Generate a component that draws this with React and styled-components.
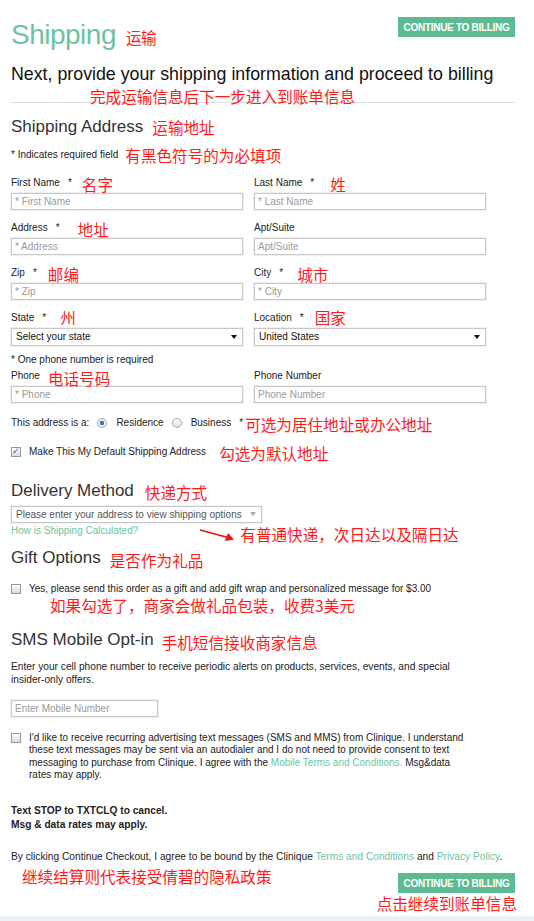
import React from "react";
import styled, { createGlobalStyle } from "styled-components";

const GlobalStyle = createGlobalStyle`
  body {
    margin: 0;
    background: #fff;
    font-family: "Liberation Sans", Arial, sans-serif;
    color: #222;
  }
`;

const Page = styled.div`
  width: 504px;
  padding: 0 19px 0 11px;
`;

const Note = styled.span`
  font-family: "Noto Sans CJK SC", sans-serif;
  color: #ff1a1a;
  font-size: ${(p) => p.size || 15.6}px;
  line-height: 1;
  margin-left: ${(p) => p.gap || 0}px;
  margin-right: ${(p) => p.right || 0}px;
  white-space: nowrap;
  position: relative;
  top: ${(p) => p.shift || 0}px;
`;

const NoteLine = styled.div`
  font-family: "Noto Sans CJK SC", sans-serif;
  color: #ff1a1a;
  font-size: 15.6px;
  line-height: 16px;
  padding-left: ${(p) => p.indent || 0}px;
  margin-top: ${(p) => p.top || 0}px;
  white-space: nowrap;
`;

const Header = styled.div`
  display: flex;
  justify-content: space-between;
  align-items: flex-start;
  height: 60px;
`;

const PageTitle = styled.h1`
  margin: 18px 0 0;
  font-size: 28px;
  line-height: 34px;
  font-weight: normal;
  color: #6cc49f;
  letter-spacing: -0.5px;
  display: flex;
  align-items: center;
`;

const Button = styled.button`
  margin-top: ${(p) => p.top || 0}px;
  width: 117px;
  height: 20px;
  border: none;
  background: #5cbb92;
  color: #fff;
  font-family: "Liberation Sans", Arial, sans-serif;
  font-weight: bold;
  font-size: 10px;
  letter-spacing: -0.3px;
  padding: 0;
`;

const Lead = styled.p`
  margin: 0;
  font-size: 17.8px;
  line-height: 28px;
  color: #111;
`;

const Divider = styled.hr`
  margin: -2px 0 0;
  border: none;
  border-top: 1px solid #ddd;
`;

const SectionTitle = styled.h2`
  margin: ${(p) => p.top || 0}px 0 0;
  font-size: 17px;
  line-height: 24px;
  font-weight: normal;
  color: #333;
  display: flex;
  align-items: center;
`;

const Small = styled.div`
  font-size: 10px;
  line-height: 14px;
  color: #222;
  margin-top: ${(p) => p.top || 0}px;
  display: flex;
  align-items: center;
`;

const Grid = styled.div`
  display: grid;
  grid-template-columns: 232px 232px;
  column-gap: 11px;
  row-gap: 11px;
  margin-top: ${(p) => p.top || 0}px;
`;

const Field = styled.div`
  display: flex;
  flex-direction: column;
  gap: 3px;
`;

const Label = styled.label`
  font-size: 10px;
  line-height: 14px;
  height: 14px;
  color: #222;
  display: flex;
  align-items: center;
  white-space: nowrap;
`;

const Star = styled.span`
  margin-left: 8px;
`;

const Input = styled.input`
  box-sizing: border-box;
  width: ${(p) => p.w || 232}px;
  height: 17px;
  margin-top: ${(p) => p.top || 0}px;
  border: 1px solid #c8c8c8;
  box-shadow: 0 0 0 1px #f0f0f0;
  padding: 0 3px;
  font-family: "Liberation Sans", Arial, sans-serif;
  font-size: 10px;
  color: #222;
  &::placeholder {
    color: #9a9a9a;
  }
`;

const Select = styled.div`
  box-sizing: border-box;
  width: ${(p) => p.w || 232}px;
  height: ${(p) => p.h || 18}px;
  margin-top: ${(p) => p.top || 0}px;
  border: 1px solid #c8c8c8;
  box-shadow: 0 0 0 1px #f0f0f0;
  display: flex;
  align-items: center;
  justify-content: space-between;
  padding: 0 4px;
  font-size: 10px;
  color: ${(p) => (p.muted ? "#555" : "#111")};
  &::after {
    content: "";
    border-left: 3.5px solid transparent;
    border-right: 3.5px solid transparent;
    border-top: 4px solid ${(p) => (p.muted ? "#aaa" : "#111")};
    margin-right: 1px;
  }
`;

const Row = styled.div`
  display: flex;
  align-items: ${(p) => p.align || "center"};
  margin-top: ${(p) => p.top || 0}px;
  font-size: 10px;
  line-height: 14px;
  color: #222;
  white-space: nowrap;
`;

const Radio = styled.span`
  box-sizing: border-box;
  width: 10px;
  height: 10px;
  border-radius: 50%;
  border: 1px solid #aaa;
  background: ${(p) =>
    p.checked ? "radial-gradient(circle, #2f7db8 0 2px, #e8eef4 2.5px)" : "linear-gradient(#fff, #ddd)"};
  margin: 0 9px 0 8px;
`;

const Check = styled.span`
  box-sizing: border-box;
  flex: none;
  width: 10px;
  height: 10px;
  border: 1px solid #999;
  background: linear-gradient(#fdfdfd, #dcdcdc);
  margin-right: 8px;
  margin-top: ${(p) => p.top || 0}px;
  display: flex;
  align-items: center;
  justify-content: center;
  color: #2a5fa8;
  font-size: 9px;
  line-height: 1;
`;

const Link = styled.a`
  color: #6cc49f;
  text-decoration: none;
`;

const HelpRow = styled.div`
  display: flex;
  align-items: flex-start;
  font-size: 10px;
  line-height: 14px;
  margin-top: 1px;
`;

const Para = styled.p`
  margin: ${(p) => p.top || 0}px 0 0;
  font-size: ${(p) => p.fs || 10.2}px;
  line-height: ${(p) => p.lh || 13}px;
  color: #222;
  font-weight: ${(p) => (p.bold ? "bold" : "normal")};
  white-space: ${(p) => (p.nowrap ? "nowrap" : "normal")};
  width: ${(p) => (p.w ? `${p.w}px` : "auto")};
`;

const Footer = styled.div`
  display: flex;
  justify-content: space-between;
  align-items: flex-start;
`;

const ButtonCol = styled.div`
  display: flex;
  flex-direction: column;
  align-items: flex-end;
  gap: 3px;
  margin-top: 10px;
`;

const Strip = styled.div`
  height: 10px;
  background: #eef1f5;
  margin-top: 4px;
`;

function Arrow() {
  return (
    <svg width="40" height="14" viewBox="0 0 40 14" style={{ marginLeft: 60, marginTop: 4 }}>
      <line x1="2" y1="2" x2="30" y2="9.5" stroke="#f01010" strokeWidth="1.6" />
      <polygon points="36,11.5 27,13 30,5" fill="#f01010" />
    </svg>
  );
}

export default function App() {
  return (
    <>
      <GlobalStyle />
      <Page>
        <Header>
          <PageTitle>
            Shipping<Note gap={10} shift={3}>运输</Note>
          </PageTitle>
          <Button top={17}>CONTINUE TO BILLING</Button>
        </Header>

        <Lead>Next, provide your shipping information and proceed to billing</Lead>
        <NoteLine indent={79}>完成运输信息后下一步进入到账单信息</NoteLine>
        <Divider />

        <SectionTitle top={12}>
          Shipping Address<Note gap={9} shift={1}>运输地址</Note>
        </SectionTitle>
        <Small top={8}>
          * Indicates required field<Note gap={7} shift={1}>有黑色符号的为必填项</Note>
        </Small>

        <Grid top={13}>
          <Field>
            <Label>First Name<Star>*</Star><Note gap={10} shift={2}>名字</Note></Label>
            <Input placeholder="* First Name" />
          </Field>
          <Field>
            <Label>Last Name<Star>*</Star><Note gap={16} shift={2}>姓</Note></Label>
            <Input placeholder="* Last Name" />
          </Field>
          <Field>
            <Label>Address<Star>*</Star><Note gap={18} shift={2}>地址</Note></Label>
            <Input placeholder="* Address" />
          </Field>
          <Field>
            <Label>Apt/Suite</Label>
            <Input placeholder="Apt/Suite" />
          </Field>
          <Field>
            <Label>Zip<Star>*</Star><Note gap={11} shift={2}>邮编</Note></Label>
            <Input placeholder="* Zip" />
          </Field>
          <Field>
            <Label>City<Star>*</Star><Note gap={14} shift={2}>城市</Note></Label>
            <Input placeholder="* City" />
          </Field>
          <Field>
            <Label>State<Star>*</Star><Note gap={14}>州</Note></Label>
            <Select>Select your state</Select>
          </Field>
          <Field>
            <Label>Location<Star>*</Star><Note gap={11}>国家</Note></Label>
            <Select>United States</Select>
          </Field>
        </Grid>

        <Small top={7}>* One phone number is required</Small>
        <Grid top={2}>
          <Field>
            <Label>Phone<Note gap={8} shift={3}>电话号码</Note></Label>
            <Input placeholder="* Phone" />
          </Field>
          <Field>
            <Label>Phone Number</Label>
            <Input placeholder="Phone Number" />
          </Field>
        </Grid>

        <Row top={13}>
          This address is a:
          <Radio checked />
          Residence
          <Radio />
          Business<Star>*</Star><Note gap={2} shift={1}>可选为居住地址或办公地址</Note>
        </Row>
        <Row top={13}>
          <Check>✓</Check>
          Make This My Default Shipping Address<Note gap={13} shift={2}>勾选为默认地址</Note>
        </Row>

        <SectionTitle top={19}>
          Delivery Method<Note gap={11} shift={2}>快递方式</Note>
        </SectionTitle>
        <Select w={251} h={17} muted top={3}>
          Please enter your address to view shipping options
        </Select>
        <HelpRow>
          <Link href="#">How is Shipping Calculated?</Link>
          <Arrow />
          <Note gap={2} shift={3}>有普通快递，次日达以及隔日达</Note>
        </HelpRow>

        <SectionTitle top={4}>
          Gift Options<Note gap={9} shift={3}>是否作为礼品</Note>
        </SectionTitle>
        <Row top={12}>
          <Check />
          Yes, please send this order as a gift and add gift wrap and personalized message for $3.00
        </Row>
        <NoteLine indent={39} top={1}>如果勾选了，商家会做礼品包装，收费3美元</NoteLine>

        <SectionTitle top={15}>
          SMS Mobile Opt-in<Note gap={8} shift={3}>手机短信接收商家信息</Note>
        </SectionTitle>
        <Para top={8} w={460}>
          Enter your cell phone number to receive periodic alerts on products, services, events, and special
          insider-only offers.
        </Para>
        <Input w={147} placeholder="Enter Mobile Number" top={14} />
        <Row top={15} align="flex-start">
          <Check top={1} />
          <Para w={442} fs={10} lh={12.4}>
            I'd like to receive recurring advertising text messages (SMS and MMS) from Clinique. I understand
            these text messages may be sent via an autodialer and I do not need to provide consent to text
            messaging to purchase from Clinique. I agree with the <Link href="#">Mobile Terms and Conditions.</Link> Msg&amp;data
            rates may apply.
          </Para>
        </Row>

        <Para bold top={23} lh={14}>
          Text STOP to TXTCLQ to cancel.
          <br />
          Msg &amp; data rates may apply.
        </Para>
        <Para top={18} nowrap>
          By clicking Continue Checkout, I agree to be bound by the Clinique{" "}
          <Link href="#">Terms and Conditions</Link> and <Link href="#">Privacy Policy</Link>.
        </Para>
        <Footer>
          <NoteLine indent={11} top={5}>继续结算则代表接受倩碧的隐私政策</NoteLine>
          <ButtonCol>
            <Button>CONTINUE TO BILLING</Button>
            <Note right={-2}>点击继续到账单信息</Note>
          </ButtonCol>
        </Footer>
      </Page>
      <Strip />
    </>
  );
}
